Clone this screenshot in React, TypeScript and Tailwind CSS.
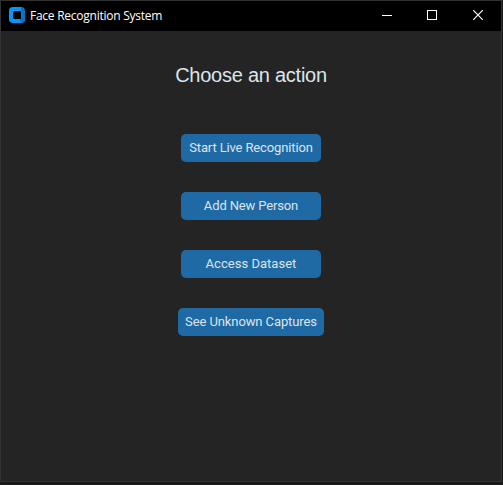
import React from 'react';

type Action = { label: string; width: string; tracking: string };

const actions: Action[] = [
  { label: 'Start Live Recognition', width: 'w-[140px]', tracking: 'tracking-[-0.13px]' },
  { label: 'Add New Person', width: 'w-[140px]', tracking: 'tracking-[-0.14px]' },
  { label: 'Access Dataset', width: 'w-[140px]', tracking: 'tracking-[0.03px]' },
  { label: 'See Unknown Captures', width: 'w-[146px]', tracking: 'tracking-[-0.1px]' },
];

function AppIcon() {
  return (
    <svg className="h-4 w-4 shrink-0" viewBox="0 0 16 16">
      <path d="M4 0h8l4 4v8a4 4 0 0 1-4 4H4a4 4 0 0 1-4-4V4a4 4 0 0 1 4-4Z" fill="#0795fa" />
      <path d="M12 0a4 4 0 0 1 4 4v8a4 4 0 0 1-4 4l-1-3.5 1.5-2v-5L12 4Z" fill="#0871c4" />
      <path d="M5 4h6.5l.5.5v7l-.5.5H5l-1-1V5Z" fill="#000" />
    </svg>
  );
}

function TitleBar() {
  return (
    <header className="flex h-[30px] items-center bg-black pb-0.5 pl-2">
      <AppIcon />
      <h1 className="ml-[5px] mt-0.5 whitespace-nowrap font-['Open_Sans',sans-serif] text-[12px] leading-4 tracking-[-0.25px] text-white">
        Face Recognition System
      </h1>
      <div className="ml-auto flex h-full">
        <button className="flex w-[46px] items-center justify-center" aria-label="Minimize">
          <svg className="h-[10px] w-[10px]" viewBox="0 0 10 10" shapeRendering="crispEdges">
            <path d="M0 5h10v1H0z" fill="#fff" />
          </svg>
        </button>
        <button className="flex w-11 items-center justify-center" aria-label="Maximize">
          <svg className="h-[10px] w-[10px]" viewBox="0 0 10 10" shapeRendering="crispEdges">
            <path d="M.5.5h9v9h-9z" fill="none" stroke="#fff" />
          </svg>
        </button>
        <button className="flex w-[47px] items-center justify-center pl-px" aria-label="Close">
          <svg className="h-[10px] w-[10px]" viewBox="0 0 10 10">
            <path d="m.2.2 9.6 9.6M9.8.2.2 9.8" stroke="#fff" strokeWidth="1.2" />
          </svg>
        </button>
      </div>
    </header>
  );
}

export default function App() {
  return (
    <div className="h-[485px] w-[503px] overflow-hidden bg-[#191919]">
      <div className="h-[482px] w-[502px] border border-[#323232] bg-[#242424]">
        <TitleBar />
        <main className="flex flex-col items-center">
          <h2 className="mt-[30px] h-7 whitespace-nowrap font-['Liberation_Sans',Arial,sans-serif] text-[20px] leading-7 tracking-[-0.25px] text-[#dce4ee]">
            Choose an action
          </h2>
          <div className="mt-[45px] flex flex-col items-center gap-[30px]">
            {actions.map((a) => (
              <button
                key={a.label}
                className={`h-7 whitespace-nowrap rounded-[5px] bg-[#1f6aa5] font-[Roboto,sans-serif] text-[13px] leading-7 text-[#dce4ee] ${a.width} ${a.tracking}`}
              >
                {a.label}
              </button>
            ))}
          </div>
        </main>
      </div>
    </div>
  );
}
